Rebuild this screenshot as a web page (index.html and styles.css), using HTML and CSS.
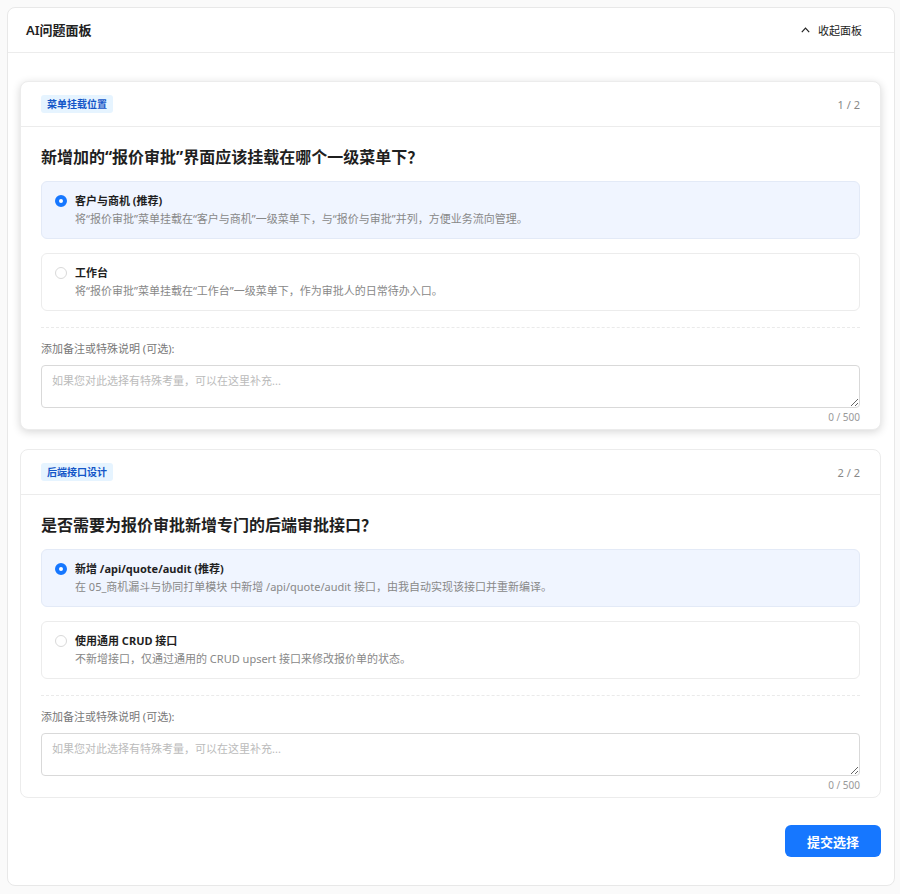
FILE: index.html
```html
<!DOCTYPE html>
<html lang="zh-CN">
<head>
    <meta charset="UTF-8">
    <meta name="viewport" content="width=device-width, initial-scale=1.0">
    <title>AI问题面板</title>
    <link rel="stylesheet" href="styles.css">
</head>
<body>
    <div class="panel">
        <div class="panel-header">
            <span class="panel-title">AI问题面板</span>
            <span class="collapse">
                <svg width="9" height="6" viewBox="0 0 9 6"><path d="M0.8 5.2 L4.5 1.2 L8.2 5.2" fill="none" stroke="#222" stroke-width="1.2"/></svg>
                收起面板
            </span>
        </div>
        <div class="panel-body">
            <div class="card active">
                <div class="card-header">
                    <span class="badge">菜单挂载位置</span>
                    <span class="step">1 / 2</span>
                </div>
                <div class="card-body">
                    <div class="question">新增加的“报价审批”界面应该挂载在哪个一级菜单下？</div>
                    <div class="option selected">
                        <div class="option-label"><span class="radio"></span>客户与商机 (推荐)</div>
                        <div class="option-desc">将“报价审批”菜单挂载在“客户与商机”一级菜单下，与“报价与审批”并列，方便业务流向管理。</div>
                    </div>
                    <div class="option">
                        <div class="option-label"><span class="radio"></span>工作台</div>
                        <div class="option-desc">将“报价审批”菜单挂载在“工作台”一级菜单下，作为审批人的日常待办入口。</div>
                    </div>
                    <div class="note">
                        <label class="note-label">添加备注或特殊说明 (可选):</label>
                        <textarea placeholder="如果您对此选择有特殊考量，可以在这里补充..."></textarea>
                        <div class="counter">0 / 500</div>
                    </div>
                </div>
            </div>

            <div class="card">
                <div class="card-header">
                    <span class="badge">后端接口设计</span>
                    <span class="step">2 / 2</span>
                </div>
                <div class="card-body">
                    <div class="question">是否需要为报价审批新增专门的后端审批接口？</div>
                    <div class="option selected">
                        <div class="option-label"><span class="radio"></span>新增 /api/quote/audit (推荐)</div>
                        <div class="option-desc">在 05_商机漏斗与协同打单模块 中新增 /api/quote/audit 接口，由我自动实现该接口并重新编译。</div>
                    </div>
                    <div class="option">
                        <div class="option-label"><span class="radio"></span>使用通用 CRUD 接口</div>
                        <div class="option-desc">不新增接口，仅通过通用的 CRUD upsert 接口来修改报价单的状态。</div>
                    </div>
                    <div class="note">
                        <label class="note-label">添加备注或特殊说明 (可选):</label>
                        <textarea placeholder="如果您对此选择有特殊考量，可以在这里补充..."></textarea>
                        <div class="counter">0 / 500</div>
                    </div>
                </div>
            </div>

            <div class="actions">
                <button class="submit">提交选择</button>
            </div>
        </div>
    </div>
</body>
</html>
```

FILE: styles.css
```css
body {
    margin: 7px 5px 0 7px;
    font-family: "Noto Sans", "Noto Sans CJK SC", sans-serif;
    background-color: #fafafa;
    color: #222;
}
.panel {
    background: #fff;
    border: 1px solid #e8e8e8;
    border-radius: 8px;
}
.panel-header {
    height: 44px;
    display: flex;
    align-items: center;
    justify-content: space-between;
    padding: 0 32px 0 18px;
    border-bottom: 1px solid #ececec;
}
.panel-title {
    font-size: 13px;
    font-weight: 600;
    margin-top: -2px;
}
.collapse {
    display: flex;
    align-items: center;
    gap: 8px;
    font-size: 11px;
    color: #222;
}
.panel-body {
    padding: 28px 13px 28px 12px;
}
.card {
    background: #fff;
    border: 1px solid #ececec;
    border-radius: 8px;
    margin-bottom: 19px;
}
.card.active {
    box-shadow: 0 2px 8px rgba(0, 0, 0, 0.16);
}
.card-header {
    display: flex;
    align-items: center;
    justify-content: space-between;
    padding: 13px 20px;
    border-bottom: 1px solid #ececec;
}
.badge {
    display: inline-block;
    height: 18px;
    line-height: 18px;
    padding: 0 6px;
    border-radius: 3px;
    background: #e6f4ff;
    color: #1456c8;
    font-size: 10px;
    font-weight: 700;
}
.step {
    font-size: 11px;
    color: #888;
}
.card-body {
    padding: 19px 20px 5px;
}
.question {
    font-size: 16px;
    font-weight: 700;
    line-height: 22px;
    margin-bottom: 13px;
    color: #1f1f1f;
}
.option {
    border: 1px solid #ececec;
    border-radius: 6px;
    padding: 11px 14px 11px 13px;
    margin-bottom: 14px;
}
.option.selected {
    background: #f0f5ff;
    border-color: #e3eaf7;
}
.option-label {
    display: flex;
    align-items: center;
    font-size: 11px;
    font-weight: 700;
    line-height: 16px;
    color: #1f1f1f;
}
.radio {
    width: 12px;
    height: 12px;
    box-sizing: border-box;
    border: 1px solid #d9d9d9;
    border-radius: 50%;
    background: #fff;
    margin-right: 8px;
}
.selected .radio {
    border: 4px solid #1677ff;
}
.option-desc {
    margin-top: 2px;
    padding-left: 20px;
    font-size: 11px;
    line-height: 16px;
    color: #888;
}
.note {
    border-top: 1px dashed #eaeaea;
    margin-top: 16px;
    padding-top: 13px;
}
.note-label {
    display: block;
    font-size: 11px;
    line-height: 16px;
    color: #777;
    margin-bottom: 8px;
}
textarea {
    display: block;
    width: 100%;
    height: 43px;
    box-sizing: border-box;
    border: 1px solid #d9d9d9;
    border-radius: 4px;
    padding: 6px 10px;
    font-family: "Noto Sans", "Noto Sans CJK SC", sans-serif;
    font-size: 11px;
    color: #333;
}
textarea::placeholder {
    color: #bbb;
}
.counter {
    text-align: right;
    font-size: 10px;
    line-height: 14px;
    margin-top: 2px;
    color: #999;
}
.actions {
    display: flex;
    justify-content: flex-end;
    margin-top: 27px;
}
.submit {
    width: 96px;
    height: 32px;
    border: none;
    border-radius: 6px;
    background: #1677ff;
    color: #fff;
    font-family: "Noto Sans", "Noto Sans CJK SC", sans-serif;
    font-size: 13px;
    font-weight: 600;
    cursor: pointer;
}
```
